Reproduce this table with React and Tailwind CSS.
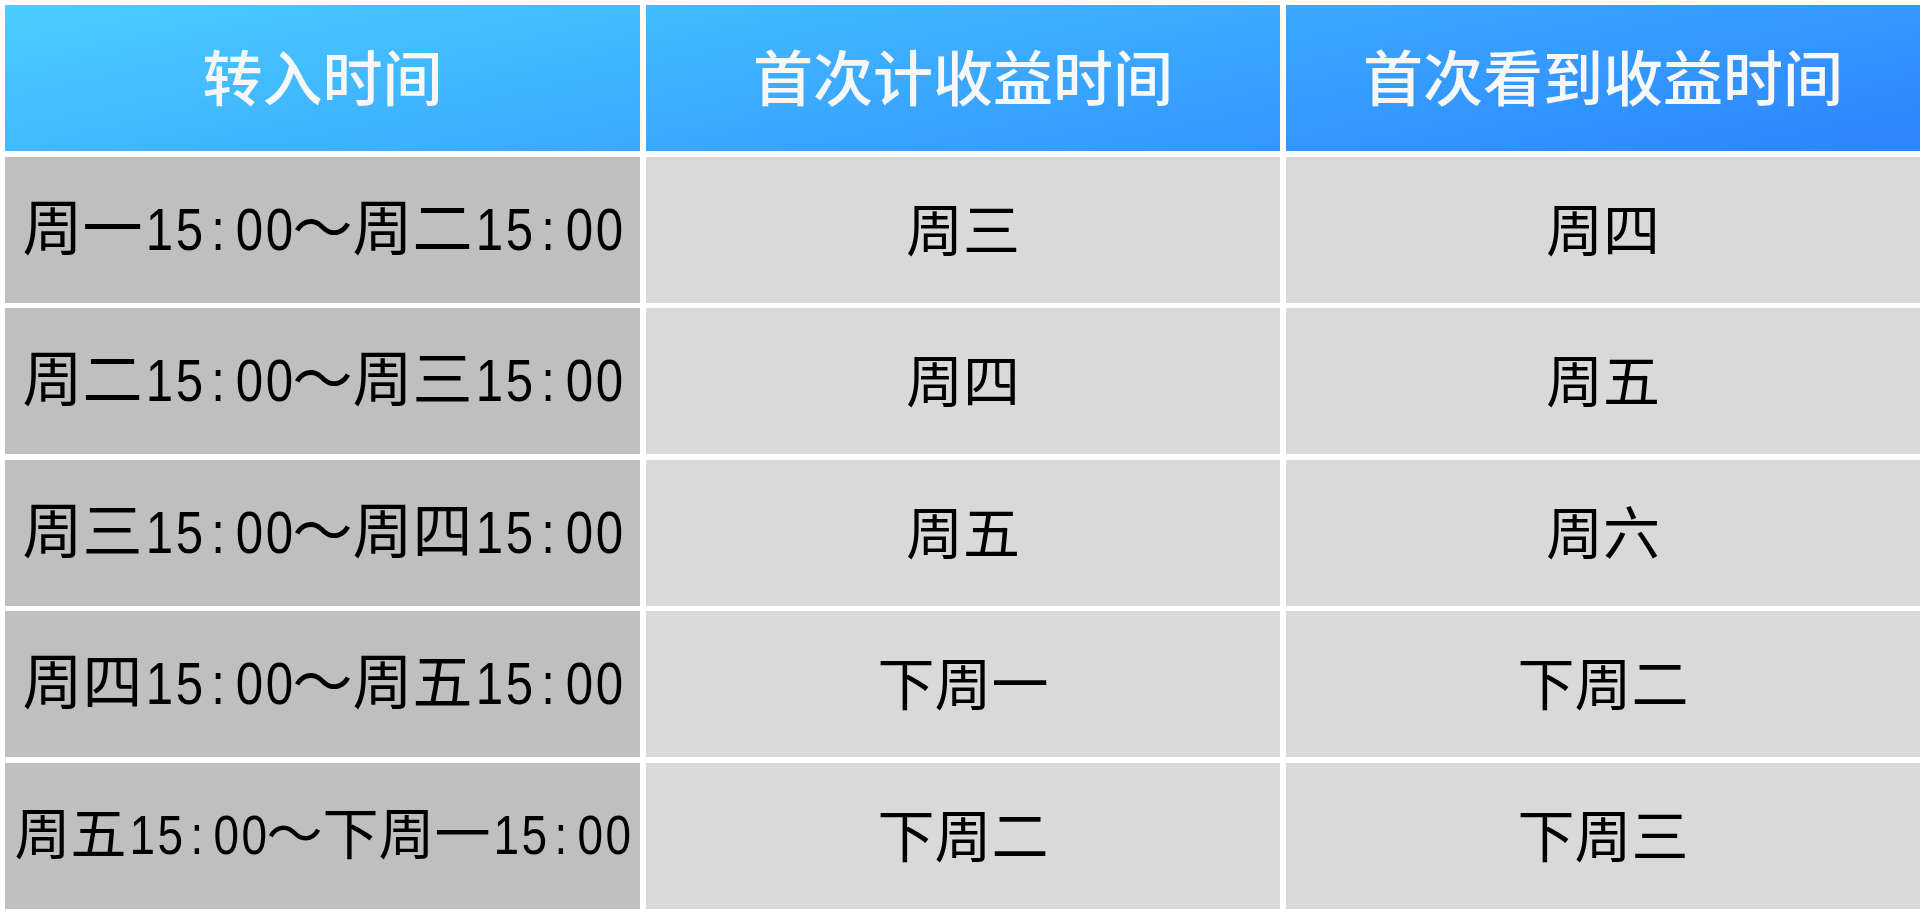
import React from 'react';

const rows = [
    { range: '周一15:00～周二15:00', start: '周三', seen: '周四' },
    { range: '周二15:00～周三15:00', start: '周四', seen: '周五' },
    { range: '周三15:00～周四15:00', start: '周五', seen: '周六' },
    { range: '周四15:00～周五15:00', start: '下周一', seen: '下周二' },
    { range: '周五15:00～下周一15:00', start: '下周二', seen: '下周三', tight: true },
];

// half-width latin cells with narrow digits, like a CJK UI font
const HalfWidth = ({ text }) => (
    <>
        {[...text].map((ch, i) =>
            /[0-9:]/.test(ch) ? (
                <span key={i} className="inline-block w-[0.5em] text-center scale-x-[0.82] font-['Liberation_Sans',sans-serif]">{ch}</span>
            ) : (
                <span key={i}>{ch}</span>
            )
        )}
    </>
);

const App = () => {
    return (
        <div className="w-[1926px] h-[920px] bg-white pt-[5px] pl-[5px] pr-[6px] font-['Noto_Sans_CJK_SC',sans-serif] text-black">
            <div className="flex flex-col gap-[5.5px]">
                <div className="grid grid-cols-[635px_640px_640px] h-[146px] bg-[linear-gradient(168deg,#4acdff,#2c84ff)] text-[60px] font-medium text-[#f7f7f7]">
                    <div className="flex items-center justify-center pb-[7px]">转入时间</div>
                    <div className="flex items-center justify-center pb-[7px] border-l-[6px] border-white">首次计收益时间</div>
                    <div className="flex items-center justify-center pb-[7px] border-l-[6px] border-white">首次看到收益时间</div>
                </div>

                {rows.map(r => (
                    <div key={r.range} className="grid grid-cols-[635px_634px_634px] gap-x-[6px] h-[146px] text-[57px]">
                        <div className={`flex items-center justify-center pb-[6px] bg-[#bfbfbf] whitespace-nowrap ${r.tight ? 'text-[56px]' : 'text-[60px]'}`}>
                            <span><HalfWidth text={r.range} /></span>
                        </div>
                        <div className="flex items-center justify-center pb-[6px] bg-[#d9d9d9]">{r.start}</div>
                        <div className="flex items-center justify-center pb-[6px] bg-[#d9d9d9]">{r.seen}</div>
                    </div>
                ))}
            </div>
        </div>
    );
};

export default App;
